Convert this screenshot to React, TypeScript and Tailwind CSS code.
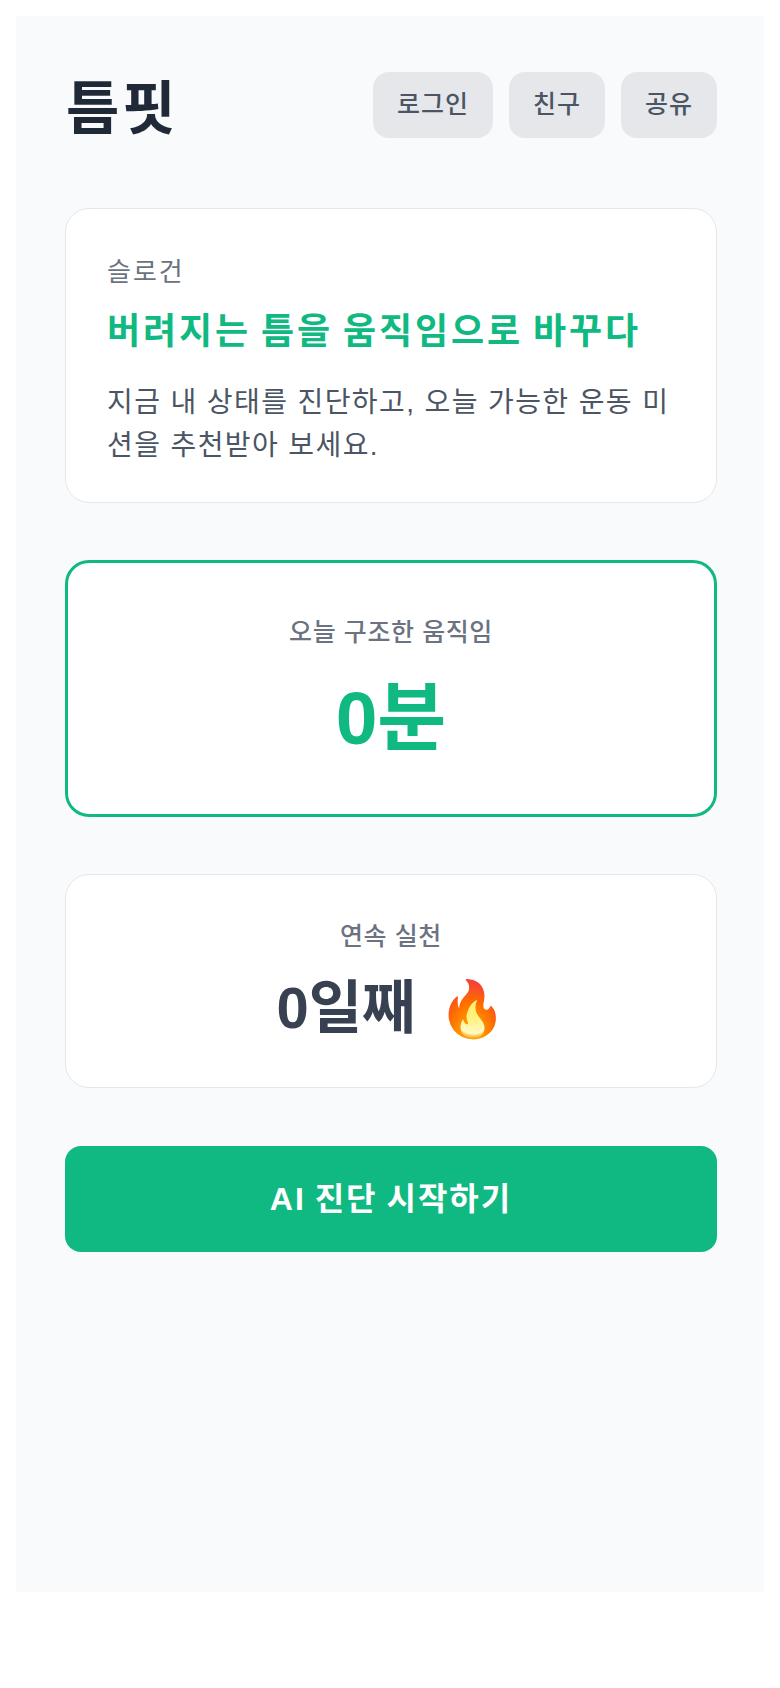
const font = { fontFamily: '"Liberation Sans", "Noto Sans CJK KR", sans-serif' }

function TopButton({ label }: { label: string }) {
  return (
    <button className="h-[66px] px-6 rounded-2xl bg-[#e5e7eb] text-[25px] tracking-[1px] font-medium text-[#4b5563]">
      {label}
    </button>
  )
}

export default function App() {
  return (
    <div style={font} className="min-h-[1688px] bg-white pt-4 px-4">
      <div className="h-[1576px] bg-[#f9fafb] pt-14 pl-[49px] pr-[47px]">
        {/* Header */}
        <div className="flex items-center justify-between h-[66px]">
          <h1 className="pl-[1px] pt-[6px] text-[58px] tracking-[3px] font-bold text-[#1f2937]">틈핏</h1>
          <div className="flex gap-4">
            <TopButton label="로그인" />
            <TopButton label="친구" />
            <TopButton label="공유" />
          </div>
        </div>

        {/* Slogan */}
        <div className="mt-[70px] h-[295px] rounded-3xl bg-white border-[1.5px] border-[#e5e7eb] pl-[41px] pr-[40px] pt-[39px]">
          <p className="text-[26px] tracking-[2px] leading-[48px] text-[#6b7280]">슬로건</p>
          <p className="mt-[9px] text-[36px] tracking-[2.9px] [word-spacing:-3px] leading-[54px] font-bold text-[#10b981]">버려지는 틈을 움직임으로 바꾸다</p>
          <p className="mt-[22px] text-[28px] tracking-[1.4px] leading-[43px] break-all text-[#4b5563]">
            지금 내 상태를 진단하고, 오늘 가능한 운동 미션을 추천받아 보세요.
          </p>
        </div>

        {/* Today */}
        <div className="mt-[57px] h-[257px] rounded-3xl bg-white border-[3px] border-[#10b981] flex flex-col items-center pt-[51px]">
          <p className="text-[25px] tracking-[0.6px] leading-[36px] font-medium text-[#6b7280]">오늘 구조한 움직임</p>
          <p className="mt-[23px] text-[75px] leading-[90px] font-bold text-[#10b981]">0분</p>
        </div>

        {/* Streak */}
        <div className="mt-[57px] h-[214px] rounded-3xl bg-white border-[1.5px] border-[#e5e7eb] flex flex-col items-center pt-[43px]">
          <p className="text-[25px] tracking-[0.6px] leading-[36px] font-medium text-[#6b7280]">연속 실천</p>
          <p className="mt-[18px] text-[58px] leading-[72px] font-bold text-[#374151]">
            0일째 <span className="ml-[6px] text-[55px]">🔥</span>
          </p>
        </div>

        <button className="mt-[58px] w-full h-[106px] rounded-2xl bg-[#10b981] text-[32px] tracking-[2px] [word-spacing:-2px] font-bold text-white">
          AI 진단 시작하기
        </button>
      </div>
    </div>
  )
}
